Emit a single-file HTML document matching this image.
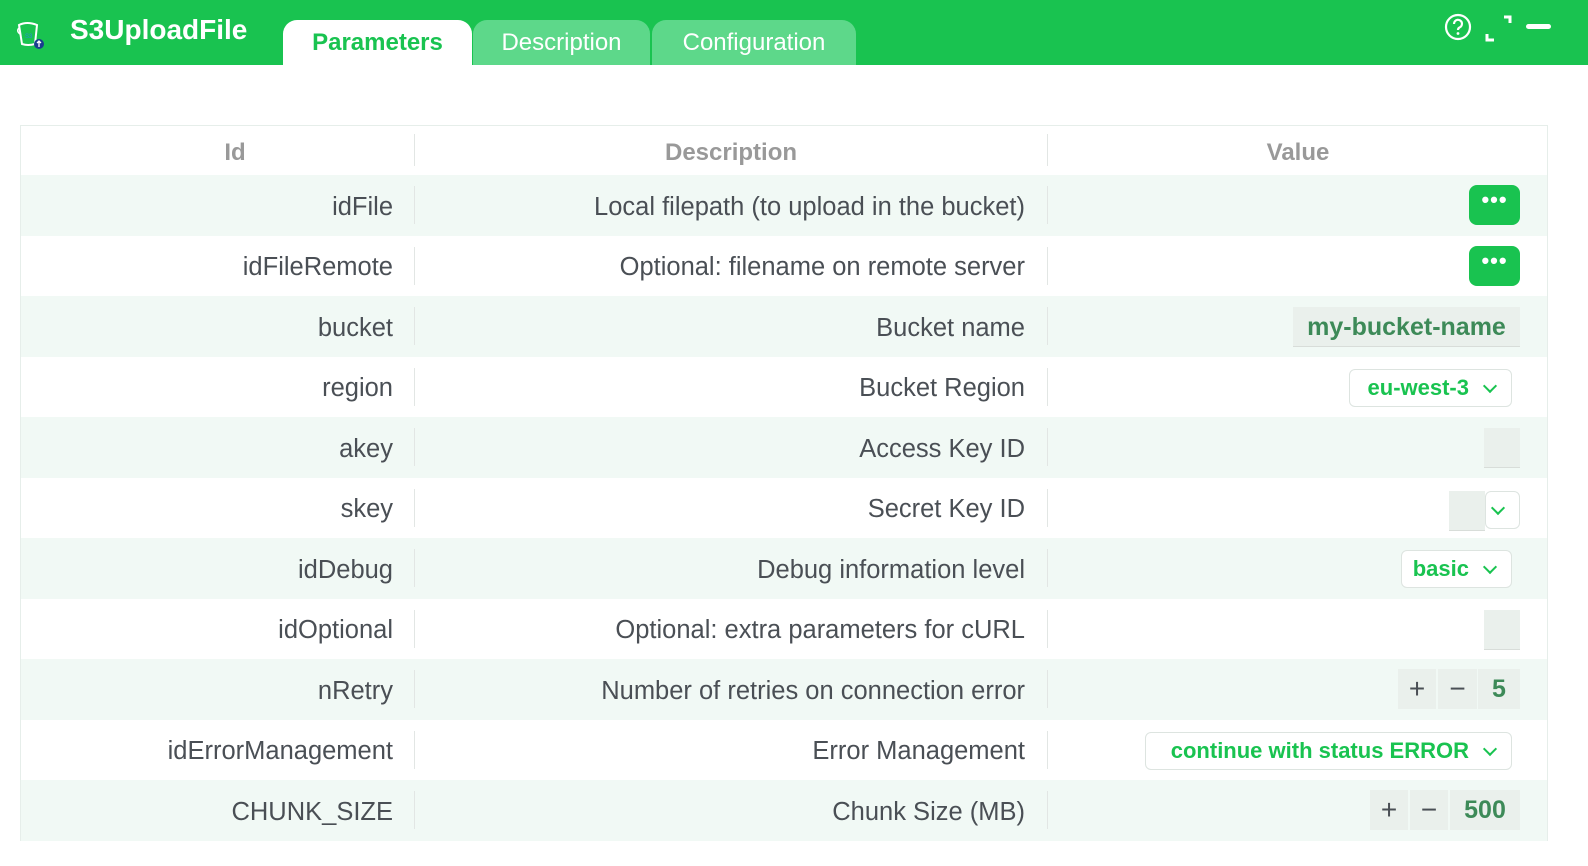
<!DOCTYPE html>
<html><head><meta charset="utf-8"><style>
*{margin:0;padding:0;box-sizing:border-box}
body{width:1588px;height:866px;background:#fff;font-family:"Liberation Sans","DejaVu Sans",sans-serif;position:relative;overflow:hidden;color:#4a4f55}
.top{position:absolute;left:0;top:0;width:1588px;height:65px;background:#19c350}
.title{position:absolute;left:70px;top:14px;color:#fff;font-weight:bold;font-size:28px}
.tab{position:absolute;top:20px;height:45px;border-radius:14px 14px 0 0;font-size:24px;text-align:center;line-height:46px;color:#fff;background:#5dd88a}
.tab.act{background:#fff;color:#19c350;font-weight:bold}
.tbl{position:absolute;left:20px;top:125px;width:1528px;height:716px;border:1px solid #e6eeea}
.row{position:absolute;left:0;width:1526px;height:60.5px}
.row.alt{background:#f1f9f5}
.c{position:absolute;top:2px;height:100%;font-size:25.5px;display:flex;align-items:center}
.id{left:0;width:372px;justify-content:flex-end}
.ds{left:394px;width:610px;justify-content:flex-end}
.sep{position:absolute;top:11px;height:38px;width:1px;background:#e2e6e4}
.hd{color:#999;font-weight:bold;justify-content:center;font-size:24px}
.btn{position:absolute;background:#19c350;border-radius:8px;width:51px;height:40px;top:10px;right:27px;color:#fff;font-size:22px;text-align:center;line-height:30px;font-weight:bold;letter-spacing:1px}
.sel{position:absolute;right:35px;top:12px;height:38px;border:1px solid #dde4e0;border-radius:6px;background:#fff;color:#19c350;font-weight:bold;font-size:22px;line-height:36px;padding-right:42px;text-align:right}
.sel:after,.chev:after{content:"";position:absolute;right:16px;top:11px;width:8px;height:8px;border-right:2px solid #19c350;border-bottom:2px solid #19c350;transform:rotate(45deg)}
.gray{position:absolute;background:#eaf0ec;border-bottom:1px solid #d8ddd9}
.num{position:absolute;top:10px;height:40px;background:#eaf0ec;font-size:28px;text-align:center;line-height:40px;color:#4a4f55}
</style></head><body>
<div class="top">
<svg style="position:absolute;left:15px;top:19px" width="32" height="32" viewBox="0 0 32 32"><path d="M4 6 Q12 2 22 6 L20 25 Q13 27 7 25 Z" fill="none" stroke="#fff" stroke-width="2"/><path d="M4 9 Q1 12 5 15" fill="none" stroke="#fff" stroke-width="1.5"/><text x="10" y="19" font-size="6" fill="#2a8bd6" font-family="Liberation Sans">S3</text><circle cx="24" cy="25" r="5" fill="#1a3d8f"/><path d="M24 22v6M22 24l2-2 2 2" stroke="#fff" stroke-width="1.3" fill="none"/></svg>
<div class="title">S3UploadFile</div>
<div class="tab act" style="left:283px;width:189px">Parameters</div>
<div class="tab" style="left:473px;width:177px">Description</div>
<div class="tab" style="left:652px;width:204px">Configuration</div>
<svg style="position:absolute;left:1443px;top:13px" width="30" height="30" viewBox="0 0 30 30"><circle cx="15" cy="14" r="12" fill="none" stroke="#fff" stroke-width="2.2"/><path d="M11 11a4 4 0 1 1 5.5 3.5c-1.2.6-1.5 1.3-1.5 2.5" fill="none" stroke="#fff" stroke-width="2.2"/><circle cx="15" cy="20.5" r="1.4" fill="#fff"/></svg>
<svg style="position:absolute;left:1484px;top:14px" width="30" height="28" viewBox="0 0 30 28"><path d="M20 3h6v6M3 20v6h7" fill="none" stroke="#fff" stroke-width="3"/></svg>
<div style="position:absolute;left:1526px;top:24px;width:25px;height:5px;background:#fff;border-radius:3px"></div>
</div>
<div class="tbl">
<div class="row" style="top:0;height:49px"><div class="c id hd" style="justify-content:center;width:428px;left:0">Id</div><div class="sep" style="left:393px;top:8px;height:32px"></div><div class="c ds hd" style="justify-content:center;left:394px;width:632px">Description</div><div class="sep" style="left:1026px;top:8px;height:32px"></div><div class="c hd" style="left:1027px;width:500px;justify-content:center">Value</div></div>

<div class="row alt" style="top:49px"><div class="c id">idFile</div><div class="sep" style="left:393px"></div><div class="c ds">Local filepath (to upload in the bucket)</div><div class="sep" style="left:1026px"></div><div class="btn">•••</div></div>
<div class="row" style="top:109.5px"><div class="c id">idFileRemote</div><div class="sep" style="left:393px"></div><div class="c ds">Optional: filename on remote server</div><div class="sep" style="left:1026px"></div><div class="btn">•••</div></div>
<div class="row alt" style="top:170px"><div class="c id">bucket</div><div class="sep" style="left:393px"></div><div class="c ds">Bucket name</div><div class="sep" style="left:1026px"></div><div class="gray" style="right:27px;top:11px;width:227px;height:40px;color:#3d8a58;font-weight:bold;font-size:25px;text-align:center;line-height:40px">my-bucket-name</div></div>
<div class="row" style="top:230.5px"><div class="c id">region</div><div class="sep" style="left:393px"></div><div class="c ds">Bucket Region</div><div class="sep" style="left:1026px"></div><div class="sel" style="width:163px">eu-west-3</div></div>
<div class="row alt" style="top:291px"><div class="c id">akey</div><div class="sep" style="left:393px"></div><div class="c ds">Access Key ID</div><div class="sep" style="left:1026px"></div><div class="gray" style="right:27px;top:11px;width:36px;height:40px"></div></div>
<div class="row" style="top:351.5px"><div class="c id">skey</div><div class="sep" style="left:393px"></div><div class="c ds">Secret Key ID</div><div class="sep" style="left:1026px"></div><div class="gray" style="right:62px;top:13px;width:36px;height:40px"></div><div class="chev" style="position:absolute;right:27px;top:13px;width:35px;height:38px;border:1px solid #dde4e0;border-radius:6px;background:#fff"></div></div>
<div class="row alt" style="top:412px"><div class="c id">idDebug</div><div class="sep" style="left:393px"></div><div class="c ds">Debug information level</div><div class="sep" style="left:1026px"></div><div class="sel" style="width:111px">basic</div></div>
<div class="row" style="top:472.5px"><div class="c id">idOptional</div><div class="sep" style="left:393px"></div><div class="c ds">Optional: extra parameters for cURL</div><div class="sep" style="left:1026px"></div><div class="gray" style="right:27px;top:11px;width:36px;height:40px"></div></div>
<div class="row alt" style="top:533px"><div class="c id">nRetry</div><div class="sep" style="left:393px"></div><div class="c ds">Number of retries on connection error</div><div class="sep" style="left:1026px"></div><div class="num" style="left:1377px;width:38px">+</div><div class="num" style="left:1417px;width:39px">−</div><div class="num" style="left:1457px;width:42px;color:#3d8a58;font-weight:bold;font-size:25px">5</div></div>
<div class="row" style="top:593.5px"><div class="c id">idErrorManagement</div><div class="sep" style="left:393px"></div><div class="c ds">Error Management</div><div class="sep" style="left:1026px"></div><div class="sel" style="width:367px">continue with status ERROR</div></div>
<div class="row alt" style="top:654px"><div class="c id">CHUNK_SIZE</div><div class="sep" style="left:393px"></div><div class="c ds">Chunk Size (MB)</div><div class="sep" style="left:1026px"></div><div class="num" style="left:1349px;width:38px">+</div><div class="num" style="left:1389px;width:38px">−</div><div class="num" style="left:1429px;width:70px;color:#3d8a58;font-weight:bold;font-size:25px">500</div></div>
</div>
</body></html>
